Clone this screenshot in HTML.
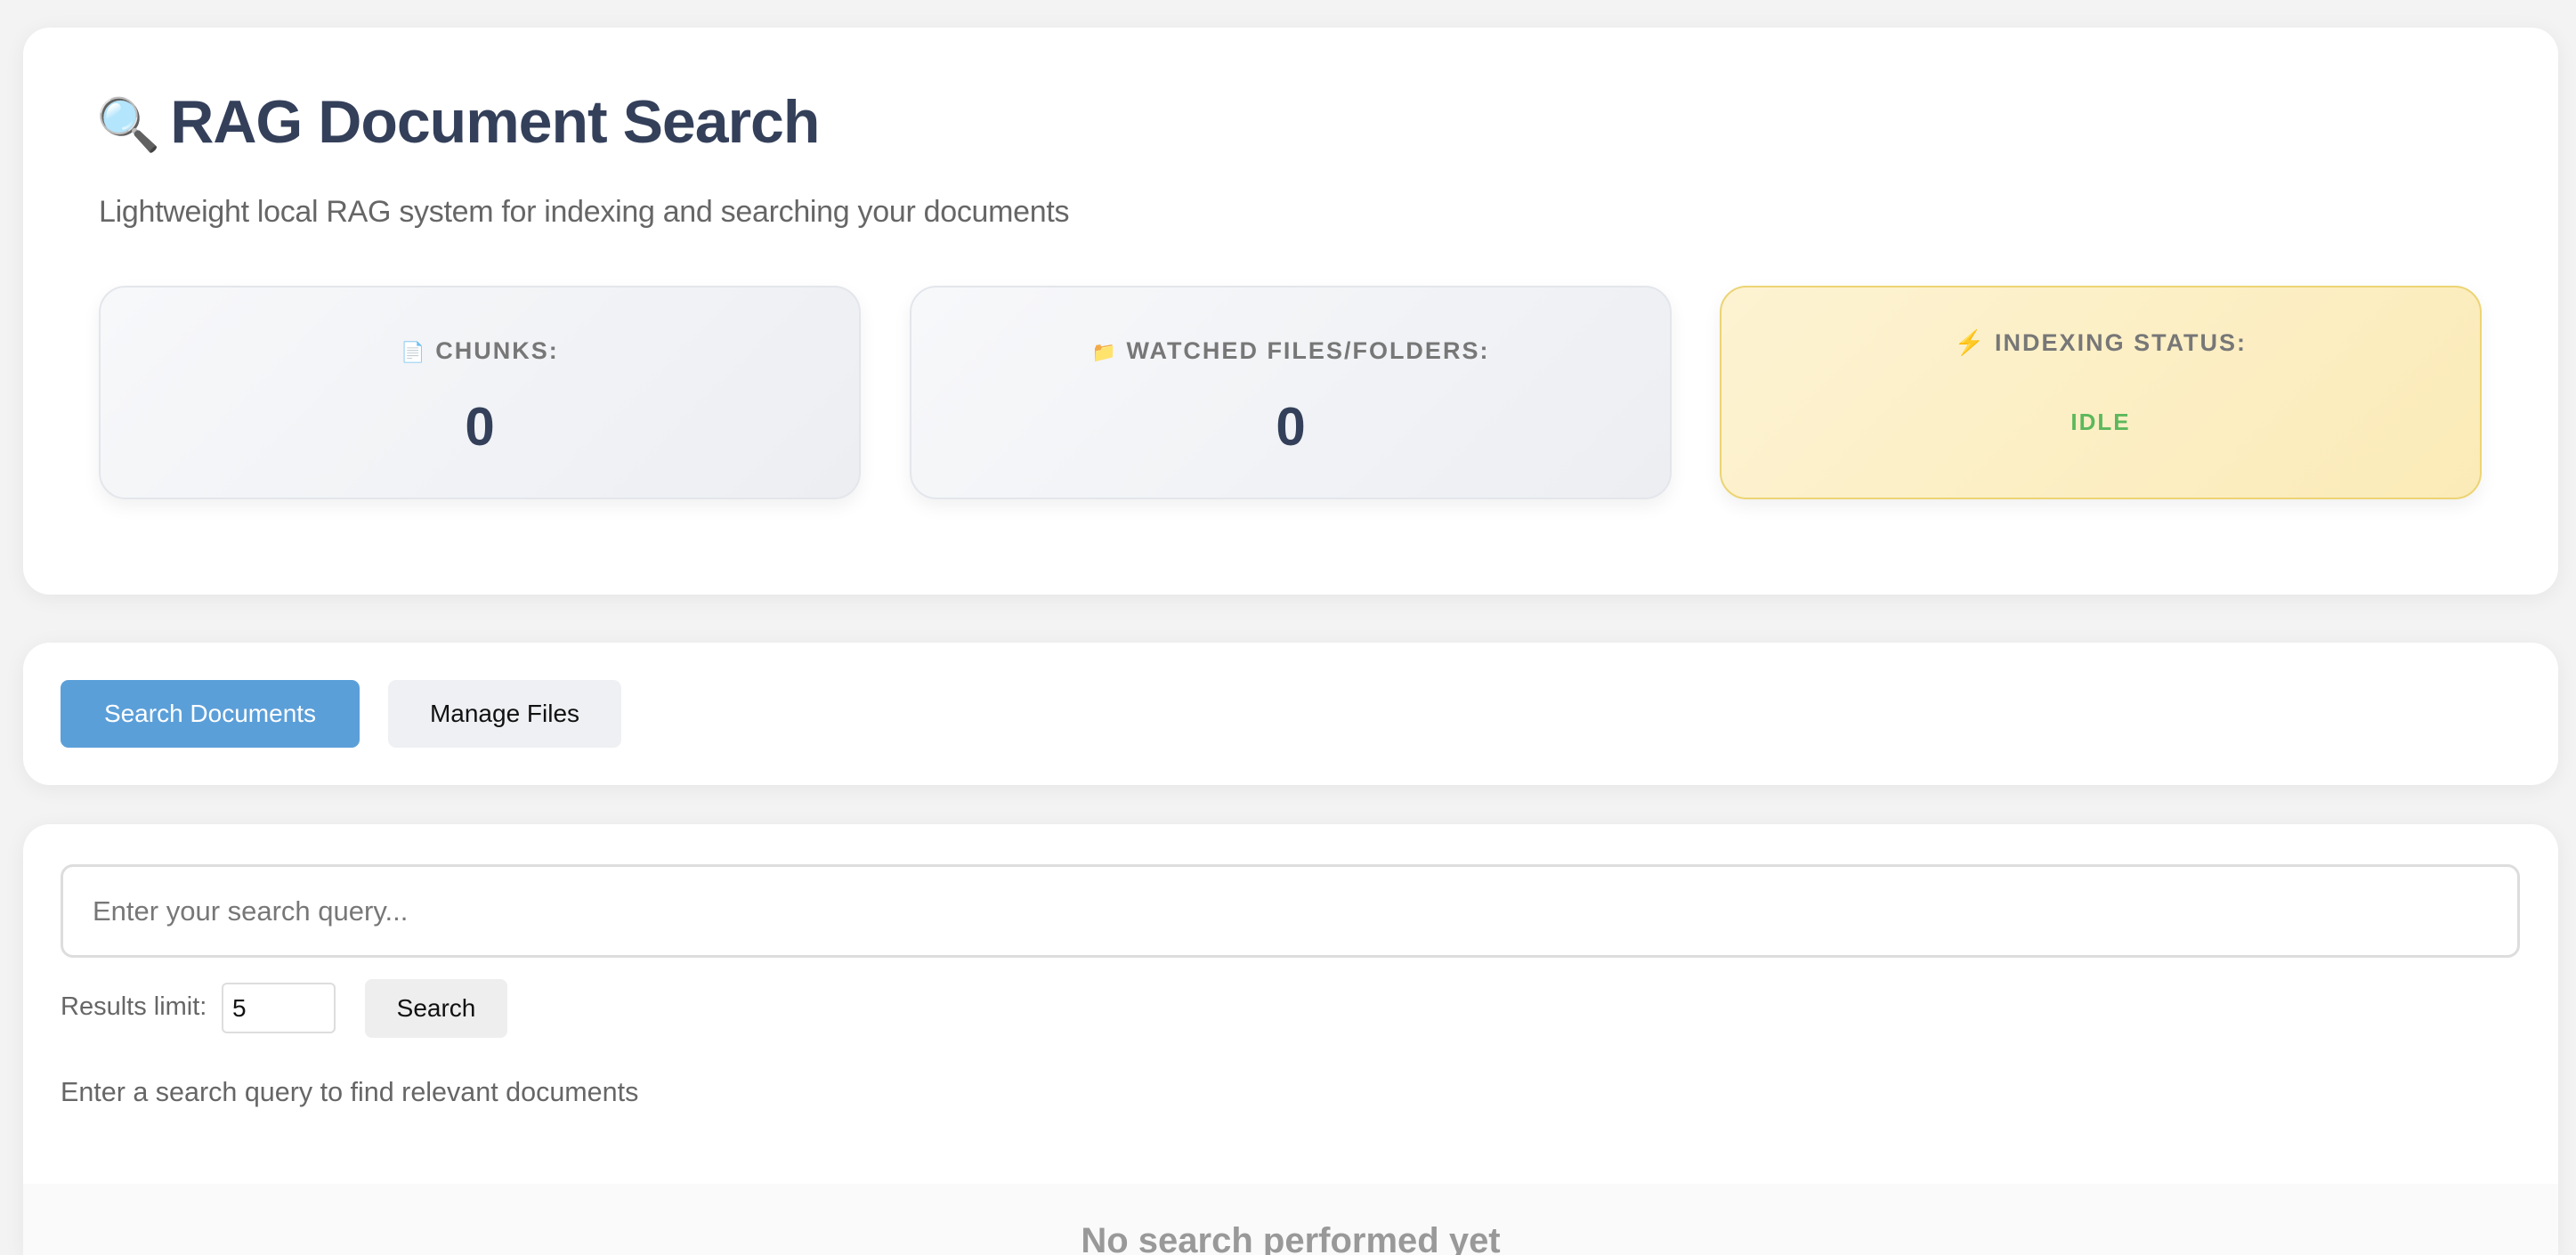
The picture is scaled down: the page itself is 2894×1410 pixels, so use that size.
<!DOCTYPE html>
<html><head><meta charset="utf-8"><style>
*{box-sizing:border-box;margin:0;padding:0}
html,body{width:2894px;height:1410px;overflow:hidden;background:#f3f3f3;font-family:"Liberation Sans",sans-serif;position:relative}
.card{position:absolute;left:26px;width:2848px;background:#fff;border-radius:30px;box-shadow:0 4px 24px rgba(0,0,0,0.06)}
h1{position:absolute;left:108px;top:98px;font-size:68px;font-weight:bold;color:#34405a;letter-spacing:-1px;white-space:nowrap}
.sub{position:absolute;left:111px;top:219px;font-size:34px;color:#666;letter-spacing:-0.3px}
.stat{position:absolute;top:321px;width:856px;height:240px;border-radius:30px;border:2px solid #e3e6eb;background:linear-gradient(135deg,#f7f8fa,#eceef2);box-shadow:0 8px 20px rgba(0,0,0,0.06);text-align:center}
.lab{position:absolute;top:56px;left:0;right:0;font-size:27px;font-weight:bold;color:#777;letter-spacing:2px}
.val{position:absolute;top:122px;left:0;right:0;font-size:60px;font-weight:bold;color:#34405a}
.btn{position:absolute;top:764px;height:76px;border-radius:9px;font-size:28px;line-height:76px;text-align:center}
</style></head><body>
<div class="card" style="top:31px;height:637px"></div>
<h1><span style="font-size:58px;margin-right:12px">🔍</span>RAG Document Search</h1>
<div class="sub">Lightweight local RAG system for indexing and searching your documents</div>
<div class="stat" style="left:111px"><div class="lab"><span style="font-size:22px">📄</span> CHUNKS:</div><div class="val">0</div></div>
<div class="stat" style="left:1022px"><div class="lab"><span style="font-size:22px">📁</span> WATCHED FILES/FOLDERS:</div><div class="val">0</div></div>
<div class="stat" style="left:1932px;background:linear-gradient(135deg,#fdf3d2,#fbebb8);border-color:#ecd474"><div class="lab" style="top:46px"><span style="color:#f0c040">⚡</span> INDEXING STATUS:</div><div style="position:absolute;top:136px;left:0;right:0;font-size:26px;font-weight:bold;color:#5cb85c;letter-spacing:2px">IDLE</div></div>

<div class="card" style="top:722px;height:160px"></div>
<div class="btn" style="left:68px;width:336px;background:#5b9fd9;color:#fff">Search Documents</div>
<div class="btn" style="left:436px;width:262px;background:#eef0f3;color:#111">Manage Files</div>

<div class="card" style="top:926px;height:484px;overflow:hidden;border-radius:30px 30px 0 0"><div style="position:absolute;top:404px;left:0;right:0;height:80px;background:#fafafa"></div></div>
<div style="position:absolute;left:68px;top:971px;width:2763px;height:105px;border:3px solid #ddd;border-radius:14px;font-size:31px;color:#777;line-height:99px;padding-left:33px">Enter your search query...</div>
<div style="position:absolute;left:68px;top:1115px;font-size:29px;color:#666">Results limit:</div>
<div style="position:absolute;left:249px;top:1104px;width:128px;height:57px;border:2px solid #ddd;border-radius:6px;font-size:28px;line-height:53px;padding-left:10px;color:#111">5</div>
<div style="position:absolute;left:410px;top:1100px;width:160px;height:66px;background:#eee;border-radius:8px;font-size:28px;line-height:66px;text-align:center;color:#111">Search</div>
<div style="position:absolute;left:68px;top:1210px;font-size:30.5px;color:#666">Enter a search query to find relevant documents</div>
<div style="position:absolute;left:26px;width:2848px;top:1372px;text-align:center;font-size:40px;font-weight:bold;color:#999">No search performed yet</div>
</body></html>
